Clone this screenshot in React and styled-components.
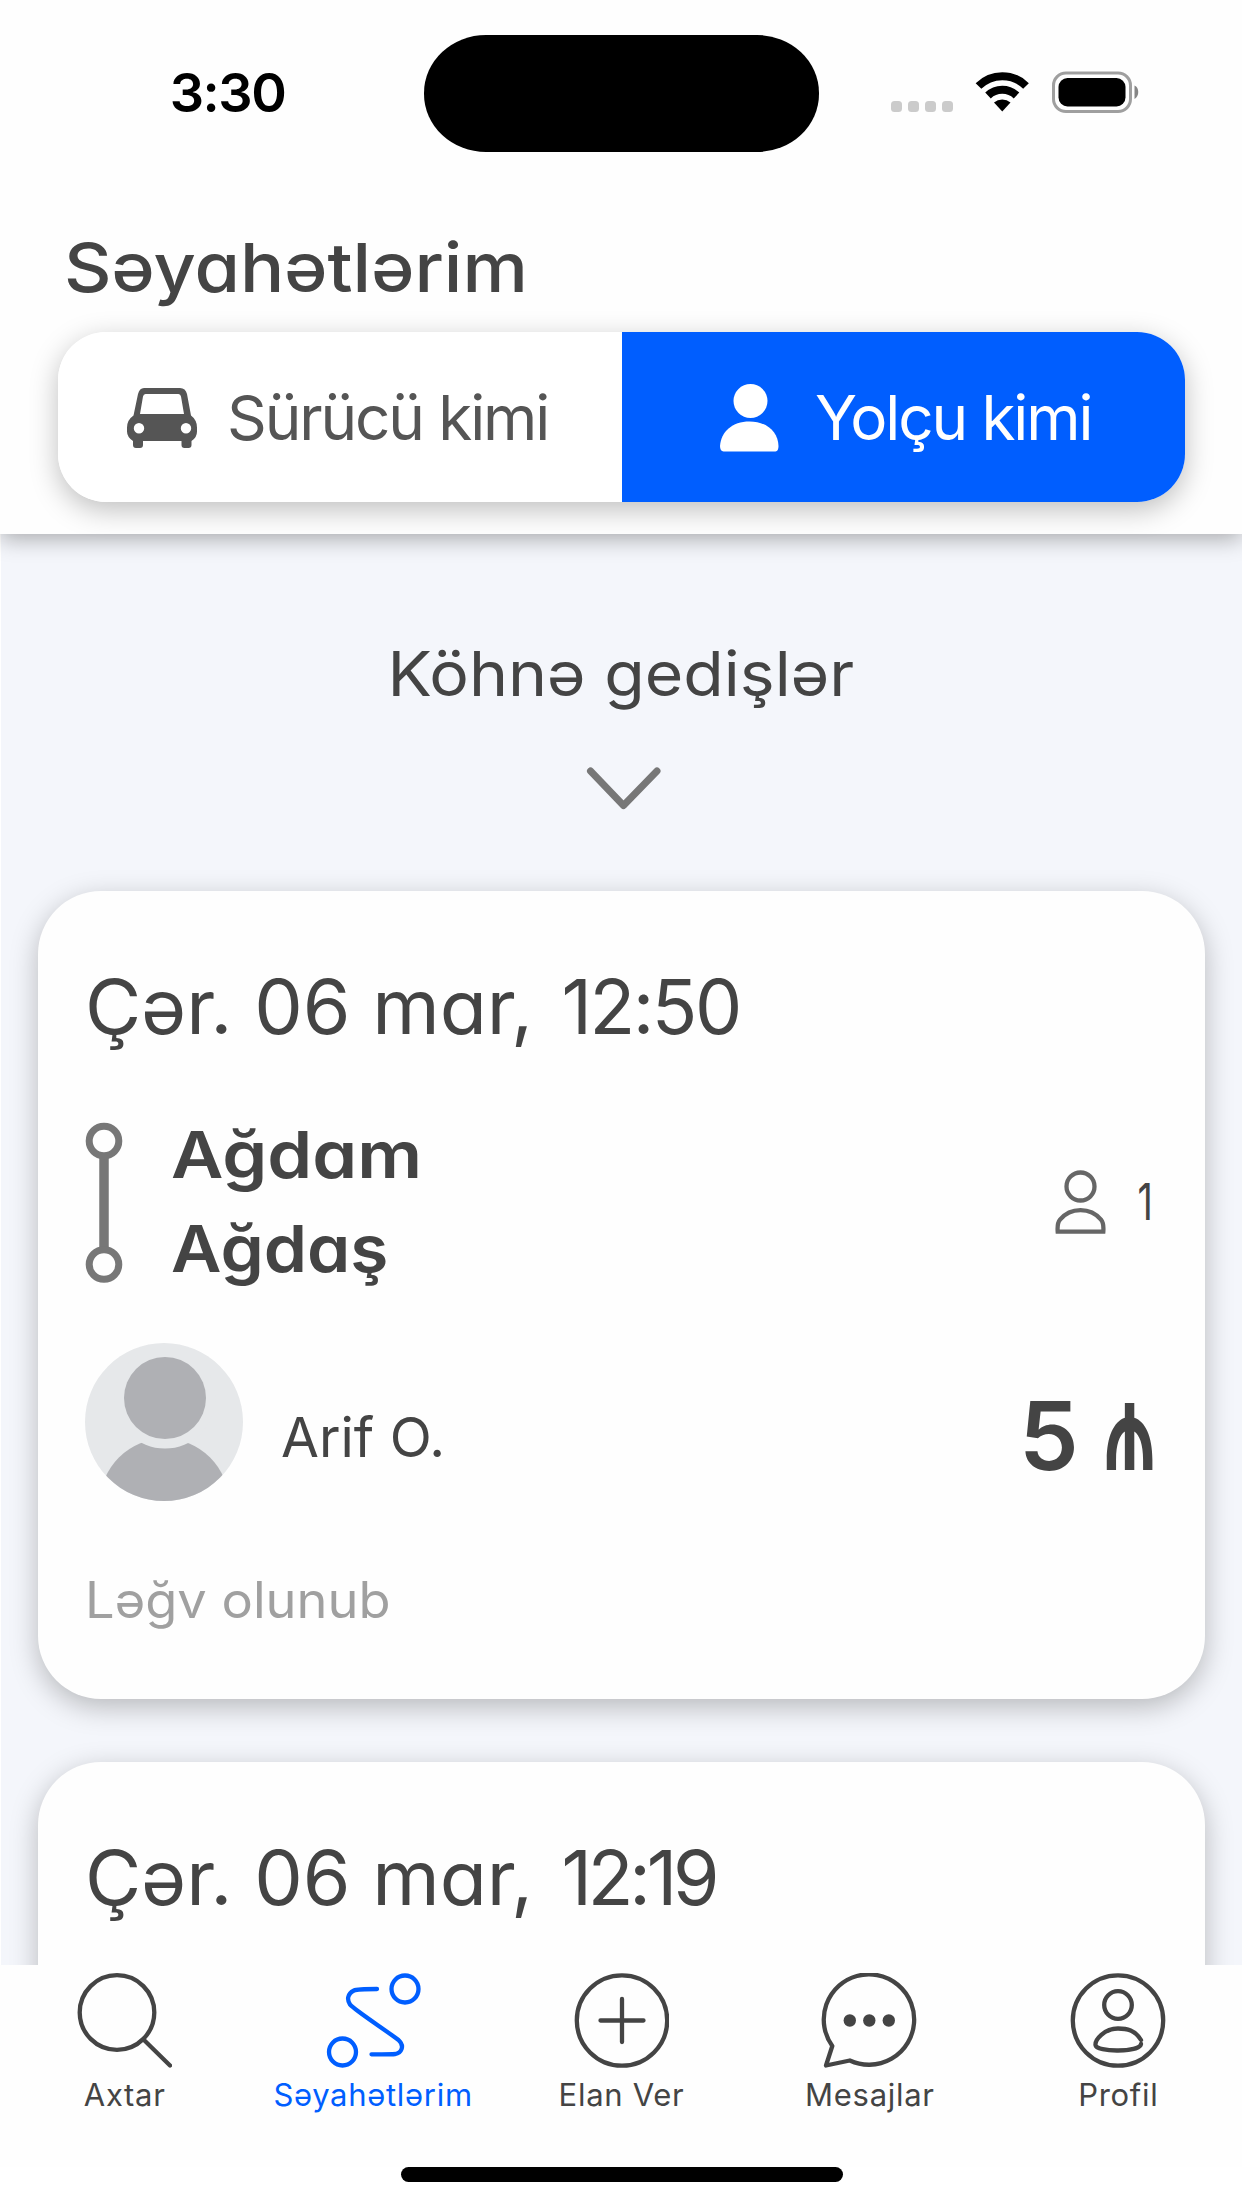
import React from 'react'
import styled, { createGlobalStyle } from 'styled-components'

const GlobalStyle = createGlobalStyle`
    * {
        box-sizing: border-box;
    }

    body {
        margin: 0;
        background: #fff;
        font-family: Inter, 'Noto Sans', sans-serif;
    }

    svg {
        display: block;
        flex: none;
    }
`

const Screen = styled.div`
    display: flex;
    flex-direction: column;
    width: 1242px;
    height: 2208px;
    overflow: hidden;
    background: #fff;
`

const Header = styled.header`
    position: relative;
    z-index: 1;
    flex: none;
    height: 534px;
    background: #fefefe;
    box-shadow: 0 4px 22px rgba(0, 0, 0, .33);
`

const StatusBar = styled.div`
    display: grid;
    grid-template-columns: 424px 395px 1fr;
    height: 187px;
    padding-top: 35px;
`

const Clock = styled.div`
    padding-left: 31px;
    line-height: 116px;
    text-align: center;
    font-size: 54px;
    font-weight: 600;
    letter-spacing: -1.5px;
    color: #000;
`

const Island = styled.div`
    height: 117px;
    border-radius: 62px / 58px;
    background: #000;
`

const StatusIcons = styled.div`
    padding: 36px 0 0 72px;
`

const Label = styled.div`
    height: ${p => p.$line}px;
    line-height: ${p => p.$line}px;
    font-size: ${p => p.$size}px;
    font-weight: ${p => p.$weight || 400};
    color: ${p => p.$color || '#444'};
    font-feature-settings: 'cv11';
    white-space: nowrap;
    transform: scaleX(${p => p.$stretch || 1});
    transform-origin: ${p => p.$origin || 'left'};
`

const TitleRow = styled.div`
    height: 145px;
    padding: 40px 0 0 64px;
`

const Segments = styled.div`
    display: flex;
    width: 1127px;
    height: 170px;
    margin-left: 58px;
    border-radius: 48px;
    overflow: hidden;
    box-shadow: 0 8px 28px rgba(0, 0, 0, .25);
`

const Segment = styled.div`
    display: flex;
    align-items: center;
    width: ${p => p.$width}px;
    padding-left: ${p => p.$pad}px;
    padding-top: 2px;
    gap: ${p => p.$gap}px;
    background: ${p => p.$active ? '#005eff' : '#fff'};
    color: ${p => p.$active ? '#fff' : '#555'};
    font-size: 62px;
    font-weight: 400;
    line-height: 170px;
    letter-spacing: -2.1px;
    white-space: nowrap;
`

const Content = styled.main`
    display: flex;
    flex-direction: column;
    gap: 63px;
    height: 1431px;
    flex: none;
    margin-left: 1px;
    padding: 94px 37px 0;
    overflow: hidden;
    background: #f4f6fb;
`

const OldTrips = styled.div`
    display: flex;
    flex-direction: column;
    align-items: center;
    gap: 47px;
    flex: none;
    height: 200px;
    padding-right: 2px;
`

const Card = styled.section`
    flex: none;
    height: 808px;
    padding: 70px 52px 0 47px;
    border-radius: 63px;
    background: #fefefe;
    box-shadow: 0 8px 28px rgba(0, 0, 0, .25);
`

const DateRow = styled.div`
    display: flex;
    gap: 40px;
`

const Time = styled(Label)`
    letter-spacing: ${p => p.$spacing}px;
`

const RouteRow = styled.div`
    display: flex;
    height: 214px;
    margin-top: 42px;
`

const RouteMark = styled.div`
    padding-top: 27px;
`

const Cities = styled.div`
    flex: 1;
    padding: 13px 0 0 48px;
`

const Seats = styled.div`
    display: flex;
    align-items: flex-start;
    gap: 26px;
    padding-top: 75px;
`

const SeatCount = styled(Label)`
    margin-top: 3px;
`

const DriverRow = styled.div`
    display: flex;
    align-items: center;
    height: 158px;
    margin-top: 34px;
`

const DriverName = styled(Label)`
    flex: 1;
    padding-left: 38px;
    margin-top: 29px;
`

const Price = styled(Label)`
    display: flex;
    margin-top: 27px;
`

// the manat sign is tall and narrow next to the digits
const Manat = styled.span`
    margin: 0 -4px 0 7px;
    transform: scale(.78, 1.3);
    transform-origin: 100% 89.5px;
`

const Status = styled(Label)`
    margin-top: 64px;
`

const TabBar = styled.nav`
    display: grid;
    grid-template-columns: repeat(5, 1fr);
    height: 202px;
    padding-top: 8px;
    background: #fefefe;
`

const Tab = styled.div`
    display: flex;
    flex-direction: column;
    align-items: center;
    gap: 6px;
    font-size: 31px;
    line-height: 40px;
    letter-spacing: .7px;
    color: ${p => p.$active ? '#005eff' : '#444'};
`

const TabName = styled.span`
    padding-left: 1px;
`

const HomeBar = styled.div`
    width: 442px;
    height: 15px;
    margin-left: 401px;
    border-radius: 8px;
    background: #000;
`

const StatusGlyphs = () => (
    <svg width="250" height="42" viewBox="0 0 250 42">
        {[0, 17, 34, 51].map(x => (
            <rect key={x} x={x} y="30" width="11" height="11" rx="3.5" fill="#cbcbcb" />
        ))}
        <g fill="none" stroke="#000">
            <path d="M87.500 15a33.500 33.500 0 0 1 47.500 0" strokeWidth="8" />
            <path d="M97 24.500a20.500 20.500 0 0 1 28.500 0" strokeWidth="8" />
        </g>
        <path d="M103 31.500a12.500 12.500 0 0 1 16.500 0l-8.250 9z" />
        <rect x="162.500" y="2" width="77" height="38.500" rx="12.500" fill="none" stroke="#9f9f9f" strokeWidth="3" />
        <rect x="167.500" y="7" width="67" height="28.500" rx="9" />
        <path d="M243.500 14.500c5 2 5 11 0 13.500z" fill="#858585" />
    </svg>
)

const CarIcon = () => (
    <svg width="70" height="60" viewBox="0 0 70 60">
        <path fill="#555" fillRule="evenodd" d="M17 0h36q5.500 0 7 6l4 21.500q6 4.500 6 12v4q0 6-5.500 9.500V57q0 3-3 3h-4q-3 0-3-3v-4H16v4q0 3-3 3H9q-3 0-3-3v-4q-6-4-6-9.500v-4q0-7.500 6.500-12L11 6q1.500-6 6-6zM18.500 6q-2 0-2.500 2.500L13 26h44L54 8.500Q53.500 6 51.500 6zM12 35a5.200 5.200 0 1 0 0 10.400A5.200 5.200 0 0 0 12 35zm47 0a5.200 5.200 0 1 0 0 10.400A5.200 5.200 0 0 0 59 35z" />
    </svg>
)

const PassengerIcon = () => (
    <svg width="59" height="68" viewBox="0 0 59 68">
        <circle cx="30.500" cy="17" r="17" fill="#fff" />
        <path fill="#fff" d="M0 62C1 48 12 37.500 29.500 37.500S58 48 58.500 62q0 5-3 5.500h-52Q0 67 0 62z" />
    </svg>
)

const Chevron = () => (
    <svg width="80" height="43" viewBox="-5 0 80 43">
        <path d="M4.500 4l33 34.500L71 4" fill="none" stroke="#777" strokeWidth="7" strokeLinecap="round" strokeLinejoin="round" />
    </svg>
)

const RouteLine = () => (
    <svg width="38" height="162" viewBox="0 0 38 162">
        <g fill="none" stroke="#777">
            <path d="M19 34v92" strokeWidth="9.500" />
            <circle cx="19" cy="19" r="14.800" strokeWidth="7" />
            <circle cx="19" cy="142.500" r="14.800" strokeWidth="7" />
        </g>
    </svg>
)

const SeatIcon = () => (
    <svg width="52" height="66" viewBox="0 0 52 66">
        <g fill="none" stroke="#666" strokeWidth="4.300">
            <circle cx="26.500" cy="16.500" r="14" />
            <path d="M3.700 61.700c-.5-6 0-9.200 2.300-12C16.500 37 36.500 37 47 49.700c2.300 2.800 2.800 6 2.300 12z" />
        </g>
    </svg>
)

const Avatar = () => (
    <svg width="158" height="158" viewBox="0 0 158 158">
        <clipPath id="face">
            <circle cx="79" cy="79" r="79" />
        </clipPath>
        <g clipPath="url(#face)">
            <rect width="158" height="158" fill="#e6e8ea" />
            <circle cx="79.500" cy="160" r="64.500" fill="#afb0b4" />
            <circle cx="80" cy="55" r="50.500" fill="#e6e8ea" />
            <circle cx="80" cy="55" r="41" fill="#afb0b4" />
        </g>
    </svg>
)

const TabIcon = ({ children }) => (
    <svg width="96" height="96" viewBox="0 0 96 96" fill="none" stroke="currentColor" strokeWidth="4.300" strokeLinecap="round">
        {children}
    </svg>
)

const tabs = [
    {
        name: 'Axtar',
        icon: <><circle cx="41" cy="39.500" r="37.300" /><path d="M68.500 67.500L94 92.500" /></>
    },
    {
        name: 'Səyahətlərim',
        active: true,
        icon: <>
            <circle cx="80" cy="16" r="13.500" />
            <circle cx="17.500" cy="79" r="13.500" />
            <path d="M52 16C41 16 32 16 29 17.500C22 21 22 27 25 31.500C31 38 59 56 73.500 67C80 73 76.500 80 70 81C66 81.500 55 81.300 46.500 81.300" />
        </>
    },
    {
        name: 'Elan Ver',
        icon: <><circle cx="49" cy="47.500" r="45.200" /><path d="M27.500 47.500h43M49 26v43" /></>
    },
    {
        name: 'Mesajlar',
        icon: <>
            <path strokeLinejoin="round" d="M11.300 73A45.200 45.200 0 1 1 28.800 87.500L5 92.500z" />
            <g fill="currentColor" stroke="none">
                <circle cx="28.800" cy="47.500" r="6.200" />
                <circle cx="48.300" cy="47.500" r="6.200" />
                <circle cx="67.800" cy="47.500" r="6.200" />
            </g>
        </>
    },
    {
        name: 'Profil',
        icon: <>
            <circle cx="48" cy="47.500" r="45.200" />
            <circle cx="48" cy="32" r="13.800" />
            <path d="M71 67C65 57 57 55.500 48 55.500C34 55.500 25 67 25.500 72C26 79.500 70 79.500 71 71" />
        </>
    }
]

const trips = [
    { date: 'Çər. 06 mar,', time: '12:50', spacing: -2.5, from: 'Ağdam', to: 'Ağdaş', seats: 1, driver: 'Arif O.', price: 5, status: 'Ləğv olunub' },
    { date: 'Çər. 06 mar,', time: '12:19', spacing: -4.2 }
]

function TripDetails({ trip }) {
    return (
        <>
            <RouteRow>
                <RouteMark><RouteLine /></RouteMark>
                <Cities>
                    <Label $size={65} $line={94} $weight={600} $stretch={1.108}>{trip.from}</Label>
                    <Label $size={65} $line={94} $weight={600} $stretch={1.067}>{trip.to}</Label>
                </Cities>
                <Seats>
                    <SeatIcon />
                    <SeatCount $size={51} $line={58} $stretch={.74} $origin="right">{trip.seats}</SeatCount>
                </Seats>
            </RouteRow>
            <DriverRow>
                <Avatar />
                <DriverName $size={55} $line={66}>{trip.driver}</DriverName>
                <Price $size={95} $line={110} $weight={600}>
                    {trip.price}
                    <Manat>₼</Manat>
                </Price>
            </DriverRow>
            <Status $size={50} $line={70} $stretch={1.048} $color="#a0a0a0">{trip.status}</Status>
        </>
    )
}

export default function App() {
    return (
        <Screen>
            <GlobalStyle />
            <Header>
                <StatusBar>
                    <Clock>3:30</Clock>
                    <Island />
                    <StatusIcons><StatusGlyphs /></StatusIcons>
                </StatusBar>
                <TitleRow>
                    <Label $size={68} $line={80} $weight={500} $stretch={1.083}>Səyahətlərim</Label>
                </TitleRow>
                <Segments>
                    <Segment $width={564} $pad={69} $gap={30}>
                        <CarIcon />
                        Sürücü kimi
                    </Segment>
                    <Segment $active $width={563} $pad={98} $gap={36}>
                        <PassengerIcon />
                        Yolçu kimi
                    </Segment>
                </Segments>
            </Header>
            <Content>
                <OldTrips>
                    <Label $size={62} $line={92} $stretch={1.066} $origin="center">Köhnə gedişlər</Label>
                    <Chevron />
                </OldTrips>
                {trips.map(trip => (
                    <Card key={trip.time}>
                        <DateRow>
                            <Label $size={75} $line={92} $stretch={1.027}>{trip.date}</Label>
                            <Time $size={75} $line={92} $spacing={trip.spacing}>{trip.time}</Time>
                        </DateRow>
                        {trip.driver && <TripDetails trip={trip} />}
                    </Card>
                ))}
            </Content>
            <TabBar>
                {tabs.map(tab => (
                    <Tab key={tab.name} $active={tab.active}>
                        <TabIcon>{tab.icon}</TabIcon>
                        <TabName>{tab.name}</TabName>
                    </Tab>
                ))}
            </TabBar>
            <HomeBar />
        </Screen>
    )
}
